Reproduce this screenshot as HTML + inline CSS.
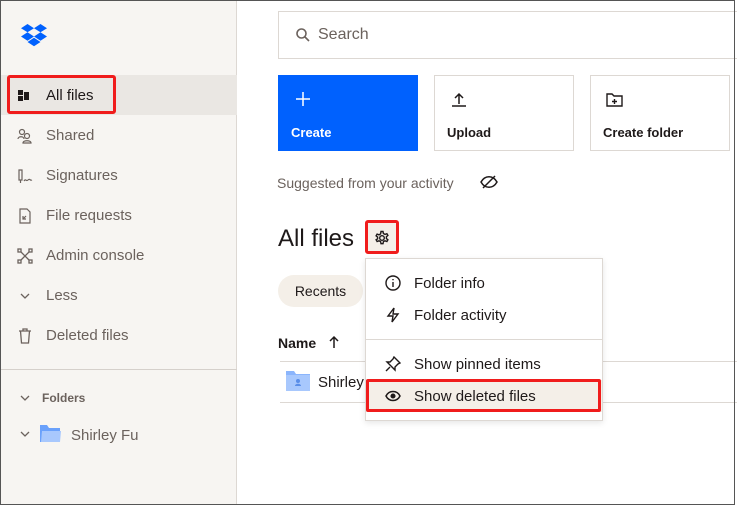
<!DOCTYPE html>
<html><head><meta charset="utf-8"><style>
*{box-sizing:border-box;margin:0;padding:0}
body{width:737px;height:507px;background:#fff;font-family:"Liberation Sans",sans-serif;position:relative;overflow:hidden;color:#1e1919}
.frame{position:absolute;left:0;top:0;width:735px;height:505px;border:1px solid #555;}
.side{position:absolute;left:1px;top:1px;width:236px;height:503px;background:#f7f5f2;border-right:1px solid #ddd8d3}
.item{position:absolute;left:0;width:236px;height:40px;font-size:15px;color:#6b625d;line-height:42px;padding-left:45px}
.item svg{position:absolute;left:16px;top:13px}
.abs{position:absolute}
.btn{position:absolute;top:75px;height:76px;border:1px solid #ddd8d3;font-size:13px;font-weight:bold;background:#fff}
.btn span{position:absolute;left:12px;top:49px}
.mi{position:absolute;left:0;width:236px;height:32px;font-size:15px;line-height:34px;padding-left:48px;color:#1e1919}
.mi svg{position:absolute;left:19px;top:8px}
</style></head><body>
<div class="side">
 <svg class="abs" style="left:20px;top:23px" width="26" height="23" viewBox="0 0 26 23"><path fill="#0061fe" d="M6.5 0L0 4.2 6.5 8.3 13 4.2zM19.5 0L13 4.2 19.5 8.3 26 4.2zM0 12.5l6.5 4.2 6.5-4.2-6.5-4.2zM19.5 8.3L13 12.5l6.5 4.2 6.5-4.2zM6.5 18l6.5 4.2 6.5-4.2L13 13.8z"/></svg>
 <div class="item" style="top:74px;background:#eae7e3;color:#1e1919"><svg width="14" height="14"><rect x="1" y="2" width="5" height="5" fill="#1e1919"/><rect x="1" y="8" width="5" height="5" fill="#1e1919"/><rect x="7" y="4" width="5" height="8" fill="#1e1919"/></svg>All files</div>
 <div class="item" style="top:114px"><svg width="16" height="16" fill="none" stroke="#6b625d" stroke-width="1.2"><circle cx="5" cy="4" r="2.5"/><path d="M1 11c0-3 6-3 6 0"/><circle cx="10" cy="8" r="2.5"/><path d="M6 15c0-3 8-3 8 0z"/></svg>Shared</div>
 <div class="item" style="top:154px"><svg width="16" height="16" fill="none" stroke="#6b625d" stroke-width="1.2"><path d="M2 2h3v10H2zM3.5 12v3M7 13c2-3 2 1 4-1s2 1 4 0"/></svg>Signatures</div>
 <div class="item" style="top:194px"><svg width="16" height="16" fill="none" stroke="#6b625d" stroke-width="1.2"><path d="M3 1h7l3 3v11H3z"/><path d="M9 8l-3 3M6 8v3h3"/></svg>File requests</div>
 <div class="item" style="top:234px"><svg width="16" height="16" fill="none" stroke="#6b625d" stroke-width="1.3"><rect x="1" y="1" width="3" height="3"/><rect x="12" y="1" width="3" height="3"/><rect x="1" y="12" width="3" height="3"/><rect x="12" y="12" width="3" height="3"/><path d="M4 4l8 8M12 4l-8 8"/></svg>Admin console</div>
 <div class="item" style="top:274px"><svg width="16" height="16" fill="none" stroke="#6b625d" stroke-width="1.3"><path d="M4 6l4 4 4-4"/></svg>Less</div>
 <div class="item" style="top:314px"><svg width="16" height="16" fill="none" stroke="#6b625d" stroke-width="1.3"><path d="M2 3h12M6 3V1h4v2M3.5 3l1 12h7l1-12"/></svg>Deleted files</div>
 <div class="abs" style="left:0;top:368px;width:236px;border-top:1px solid #d5d0cb"></div>
 <svg class="abs" style="left:17px;top:390px" width="14" height="14" fill="none" stroke="#6b625d" stroke-width="1.3"><path d="M3 5l4 4 4-4"/></svg>
 <div class="abs" style="left:41px;top:390px;font-size:12px;font-weight:bold;color:#6b625d">Folders</div>
 <svg class="abs" style="left:17px;top:426px" width="14" height="14" fill="none" stroke="#6b625d" stroke-width="1.3"><path d="M3 5l4 4 4-4"/></svg>
 <svg class="abs" style="left:38px;top:423px" width="23" height="19"><path fill="#6aa1fb" d="M1 1h7l2 3h11v14H1z"/><path fill="#a8c8fd" d="M3 7h19l-1 11H2z"/></svg>
 <div class="abs" style="left:70px;top:426px;font-size:15px;color:#6b625d">Shirley Fu</div>
</div>
<div class="abs" style="left:7px;top:75px;width:109px;height:39px;border:3px solid #f01c1c;border-radius:3px"></div>

<div class="abs" style="left:278px;top:11px;width:470px;height:48px;border:1px solid #ddd8d3"></div>
<svg class="abs" style="left:295px;top:27px" width="16" height="16" fill="none" stroke="#6b625d" stroke-width="1.6"><circle cx="6.5" cy="6.5" r="4.5"/><path d="M10 10l4 4"/></svg>
<div class="abs" style="left:318px;top:26px;font-size:16px;color:#6b625d">Search</div>

<div class="btn" style="left:278px;width:140px;background:#0061fe;border-color:#0061fe;color:#fff"><svg class="abs" style="left:16px;top:15px" width="16" height="16" stroke="#fff" stroke-width="1.5"><path d="M8 1v14M1 8h14"/></svg><span>Create</span></div>
<div class="btn" style="left:434px;width:140px"><svg class="abs" style="left:16px;top:16px" width="16" height="16" fill="none" stroke="#1e1919" stroke-width="1.5"><path d="M8 12V2M4 6l4-4 4 4M1 14h14"/></svg><span>Upload</span></div>
<div class="btn" style="left:590px;width:140px"><svg class="abs" style="left:15px;top:16px" width="18" height="16" fill="none" stroke="#1e1919" stroke-width="1.4"><path d="M1 2h5l2 2h8v10H1z M8.5 7v5M6 9.5h5"/></svg><span>Create folder</span></div>

<div class="abs" style="left:277px;top:175px;font-size:14px;color:#6b625d">Suggested from your activity</div>
<svg class="abs" style="left:480px;top:175px" width="18" height="14" fill="none" stroke="#1e1919" stroke-width="1.5"><path d="M1 7c4-7 12-7 16 0-4 7-12 7-16 0z"/><path d="M3 13L15 1"/></svg>

<div class="abs" style="left:278px;top:225px;font-size:24px;color:#1e1919">All files</div>
<div class="abs" style="left:365px;top:220px;width:34px;height:34px;border:3px solid #f01c1c;border-radius:3px;background:#f4efe8"></div>
<svg class="abs" style="left:374px;top:230px" width="16" height="16" fill="none" stroke="#1e1919" stroke-width="1.4"><circle cx="8" cy="8" r="2.3"/><path d="M7 1.5h2l.4 2 1.6.9 1.9-.7 1 1.7-1.5 1.3v1.8l1.5 1.3-1 1.7-1.9-.7-1.6.9-.4 2H7l-.4-2-1.6-.9-1.9.7-1-1.7L3.6 8.9V7.1L2.1 5.8l1-1.7 1.9.7 1.6-.9z"/></svg>

<div class="abs" style="left:278px;top:275px;width:85px;height:32px;border-radius:16px;background:#f4efe8;font-size:14px;line-height:32px;text-align:center">Recents</div>
<div class="abs" style="left:278px;top:335px;font-size:14px;font-weight:bold">Name</div>
<svg class="abs" style="left:328px;top:335px" width="12" height="14" fill="none" stroke="#1e1919" stroke-width="1.5"><path d="M6 13V2M2 6l4-4 4 4"/></svg>
<div class="abs" style="left:280px;top:361px;width:460px;border-top:1px solid #ddd8d3"></div>
<svg class="abs" style="left:286px;top:370px" width="24" height="21"><path fill="#8bb5fc" d="M0 1h8l2 3h14v17H0z"/><path fill="#a8c8fd" d="M0 5h24v16H0z"/><path fill="#5a8ee8" d="M9 16c0-3 6-3 6 0zM12 9a2 2 0 1 1 0 4 2 2 0 1 1 0-4z"/></svg>
<div class="abs" style="left:318px;top:374px;font-size:15px">Shirley</div>
<div class="abs" style="left:280px;top:402px;width:460px;border-top:1px solid #ddd8d3"></div>

<div class="abs" style="left:365px;top:258px;width:238px;height:163px;background:#fff;border:1px solid #ddd8d3;box-shadow:0 2px 6px rgba(0,0,0,.1)">
 <div class="mi" style="top:8px"><svg width="16" height="16" fill="none" stroke="#1e1919" stroke-width="1.4"><circle cx="8" cy="8" r="7"/><path d="M8 7v5M8 4v1.2"/></svg>Folder info</div>
 <div class="mi" style="top:40px"><svg width="16" height="16" fill="none" stroke="#1e1919" stroke-width="1.4"><path d="M9 1L3 9h5l-1 6 6-8H8z"/></svg>Folder activity</div>
 <div class="abs" style="left:0;top:80px;width:236px;border-top:1px solid #ddd8d3"></div>
 <div class="mi" style="top:89px"><svg width="16" height="16" fill="none" stroke="#1e1919" stroke-width="1.4"><path d="M9 1l6 6-2 1-3 3 0 3-8-8 3 0 3-3zM5 11l-4 4"/></svg>Show pinned items</div>
 <div class="mi" style="top:121px;background:#f4efe8"><svg width="16" height="16" fill="none" stroke="#1e1919" stroke-width="1.5"><path d="M1 8c3-6 11-6 14 0-3 6-11 6-14 0z"/><circle cx="8" cy="8" r="1.8" fill="#1e1919"/></svg>Show deleted files</div>
</div>
<div class="abs" style="left:366px;top:379px;width:235px;height:33px;border:3px solid #f01c1c;border-radius:2px"></div>
<div class="frame"></div>
</body></html>
